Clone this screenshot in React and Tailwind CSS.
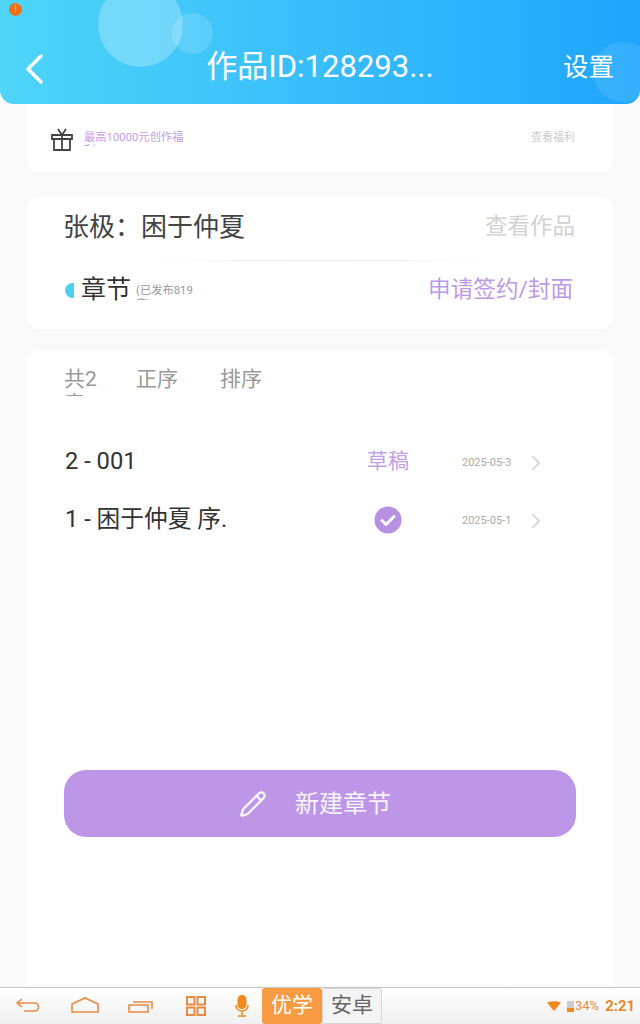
import React from "react";
import { ChevronRight, Pencil } from "lucide-react";

const chapters = [
  { id: 1, title: "2 - 001", status: "草稿", date: "2025-05-3" },
  { id: 2, title: "1 - 困于仲夏 序.", date: "2025-05-1" },
];

const ChapterRow = ({ chapter }) => (
  <div className="flex items-center h-[58px]">
    <div className="w-[293px] text-[23.7px] text-[#333]">{chapter.title}</div>
    <div className="w-[60px] flex justify-center">
      {chapter.status ? (
        <span className="text-[21px] text-[#c29fe6]">{chapter.status}</span>
      ) : (
        <svg width="28" height="28" viewBox="0 0 28 28">
          <circle cx="14" cy="14" r="13.5" fill="#b690e2" />
          <path d="M8 14.5l4 4 8-8" fill="none" stroke="#fff" strokeWidth="3" strokeLinecap="round" strokeLinejoin="round" />
        </svg>
      )}
    </div>
    <div className="ml-[44px] mt-[3px] w-[60px] text-[11px] text-[#aaa]">{chapter.date}</div>
    <ChevronRight size={26} strokeWidth={1.2} className="ml-px mt-[2px] text-[#ccc]" />
  </div>
);

const TaskIcon = ({ children }) => (
  <svg width="30" height="22" viewBox="0 0 30 22" fill="none" stroke="#e98a45" strokeWidth="1.6">
    {children}
  </svg>
);

const Taskbar = () => (
  <div className="h-[37px] flex items-center border-t border-[#c8c8c8] bg-gradient-to-b from-white to-[#f0f0f0]">
    <div className="flex items-center gap-[26.5px] pl-[13px]">
      <TaskIcon>
        <path d="M9 4L4 8l5 4M4 8h17c6 0 6 8 0 8H11" />
      </TaskIcon>
      <TaskIcon>
        <path d="M2 9l13-6 13 6v8H2z" />
      </TaskIcon>
      <TaskIcon>
        <path d="M3 10h19v7H3zM7 7h19v7" />
      </TaskIcon>
    </div>
    <svg width="20" height="20" viewBox="0 0 20 20" fill="none" stroke="#e98a45" strokeWidth="2" className="ml-[30px]">
      <path d="M1 1h7.500v7.500H1zM11.500 1H19v7.500h-7.500zM1 11.500h7.500V19H1zM11.500 11.500H19V19h-7.500z" />
    </svg>
    <svg width="16" height="24" viewBox="0 0 16 24" className="ml-[28px]">
      <rect x="3.500" y="1" width="9" height="14" rx="4.500" fill="#f08a1d" />
      <path d="M2 11c0 8 12 8 12 0M8 17v4M4 22h8" fill="none" stroke="#f08a1d" strokeWidth="1.6" />
    </svg>
    <div className="ml-[12px] w-[60px] h-[36px] flex items-center justify-center rounded-[3px] bg-[#f89b42] text-white text-[21px]">优学</div>
    <div className="w-[60px] h-[36px] flex items-center justify-center rounded-[3px] border border-[#d5d5d5] bg-[#f4f4f4] text-[#666] text-[21px]">安卓</div>
    <svg width="14" height="10" viewBox="0 0 14 10" className="ml-[165px]">
      <path d="M0 1.500Q7 -1 14 1.500L7 10z" fill="#f08a1d" />
    </svg>
    <div className="ml-[6px] w-[7px] h-[11px] bg-gradient-to-b from-[#ccc] from-60% to-[#f08a1d] to-60%" />
    <span className="ml-px text-[13px] text-[#e98a45]">34%</span>
    <span className="ml-[6px] text-[15px] font-bold text-[#e6872e]">2:21</span>
  </div>
);

const App = () => {
  return (
    <div className="w-[640px] h-[1024px] flex flex-col overflow-hidden bg-[#f9f9f9] font-['Roboto','Noto_Sans_CJK_SC',sans-serif]">
      <header className="relative z-10 h-[104px] shrink-0 overflow-hidden rounded-b-[14px] bg-gradient-to-r from-[#4ed5f8] to-[#1fa5fb] flex items-center justify-between pl-[24px] pr-[26px] pt-[31px] text-white">
        <div className="absolute left-[98px] top-[-18px] w-[85px] h-[85px] rounded-full bg-white/25" />
        <div className="absolute left-[172px] top-[13px] w-[41px] h-[41px] rounded-full bg-white/15" />
        <div className="absolute left-[593px] top-[42px] w-[60px] h-[60px] rounded-full bg-white/10" />
        <div className="absolute left-[9px] top-[3px] w-[13px] h-[13px] rounded-full bg-[#f0701a] text-[9px] leading-[13px] text-center text-[#ffd24a]">!</div>
        <div className="w-[52px] mt-[2px]">
          <svg width="20" height="32" viewBox="0 0 20 32" fill="none" stroke="#fff" strokeWidth="3.500" strokeLinecap="round" strokeLinejoin="round">
            <path d="M17 3L4 16l13 13" />
          </svg>
        </div>
        <h1 className="text-[31px] font-normal ml-[2px]">作品ID:128293...</h1>
        <span className="relative w-[52px] pl-px text-[25.5px] whitespace-nowrap">设置</span>
      </header>

      <main className="flex-1 flex flex-col px-[26px]">
        <section className="h-[68px] shrink-0 flex items-center rounded-b-[14px] bg-white pl-[24px] pr-[39px]">
          <svg width="22" height="23" viewBox="0 0 22 23" fill="none" stroke="#444" strokeWidth="1.8" className="ml-px mt-[2px]">
            <path d="M1 7h20v4H1zM3 11v11h16V11M11 7v15M7 1l4 6 4-6" />
          </svg>
          <div className="ml-[11px] w-[103px] h-[15px] overflow-hidden text-[11.3px] leading-[13px] text-[#c39ee6]">最高10000元创作福利</div>
          <span className="ml-auto text-[11px] text-[#ccc]">查看福利</span>
        </section>

        <section className="mt-[25px] h-[132px] shrink-0 rounded-[14px] bg-white px-[38px]">
          <div className="h-[63px] flex items-center justify-between pb-[3px]">
            <span className="ml-[-1px] text-[26px] text-[#444]">张极：困于仲夏</span>
            <span className="mr-px text-[22.5px] text-[#d2d2d2]">查看作品</span>
          </div>
          <div className="mx-[76px] h-px bg-gradient-to-r from-white via-[#e8e8e8] to-white" />
          <div className="h-[58px] flex items-center">
            <div className="ml-px w-[9px] h-[15px] rounded-l-full bg-[#4ed0f0]" />
            <span className="ml-[7px] text-[25px] text-[#333]">章节</span>
            <div className="ml-[5px] mt-[3px] w-[60px] h-[16px] overflow-hidden text-[11.3px] leading-[14px] text-[#999]">(已发布819章)</div>
            <span className="ml-auto mr-[3px] text-[22.6px] text-[#bd9ae6]">申请签约/封面</span>
          </div>
        </section>

        <section className="mt-[21px] flex-1 rounded-t-[14px] bg-white px-[39px]">
          <div className="h-[46px] flex items-end text-[21px] text-[#999]">
            <div className="ml-[-1px] w-[36px] h-[29px] overflow-hidden leading-[25px]">共2章</div>
            <span className="ml-[36px] leading-[33px]">正序</span>
            <span className="ml-[42px] leading-[33px]">排序</span>
          </div>
          <div className="mt-[37px]">
            {chapters.map((chapter) => (
              <ChapterRow key={chapter.id} chapter={chapter} />
            ))}
          </div>
          <button className="mt-[221px] ml-[-1px] w-[512px] h-[67px] flex items-center justify-center gap-[28px] pr-[10px] rounded-[22px] bg-[#bd96e8] text-[24px] text-white/90">
            <Pencil size={28} strokeWidth={2} />
            新建章节
          </button>
        </section>
      </main>

      <div className="h-[2px] shrink-0" />
      <Taskbar />
    </div>
  );
};

export default App;
